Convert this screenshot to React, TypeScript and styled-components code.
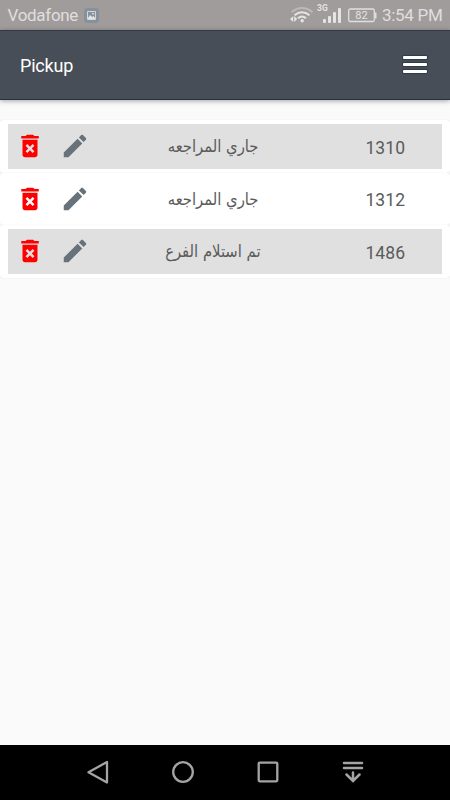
import React from "react";
import styled, { createGlobalStyle } from "styled-components";

const GlobalStyle = createGlobalStyle`
  * { box-sizing: border-box; }
  body { margin: 0; background: #fafafa; font-family: Roboto, "Noto Sans", sans-serif; }
`;

const Screen = styled.div`
  width: 450px;
  height: 800px;
  display: flex;
  flex-direction: column;
  overflow: hidden;
  background: #fafafa;
`;

const StatusBar = styled.div`
  height: 30px;
  flex: none;
  display: flex;
  align-items: center;
  justify-content: space-between;
  padding: 0 8px 0 7.5px;
  background: #a09c9c;
  color: #e0dede;
  font-size: 17px;
  line-height: 30px;
`;

const StatusGroup = styled.div`
  display: flex;
  align-items: center;
  height: 30px;
`;

const Carrier = styled.span`
  width: 76.5px;
  letter-spacing: -0.3px;
`;

const Clock = styled.span`
  width: 60px;
  margin-left: 5px;
  white-space: nowrap;
  letter-spacing: -0.3px;
`;

const Header = styled.header`
  height: 70px;
  flex: none;
  display: flex;
  align-items: center;
  justify-content: space-between;
  padding: 0 23px 0 20px;
  background: #474e57;
  border-top: 1px solid #303945;
  border-bottom: 1px solid #29333f;
  box-shadow: 0 1px 5px rgba(0, 0, 0, 0.35);
  color: #fff;
`;

const Title = styled.h1`
  margin: 2px 0 0;
  font-size: 18px;
  font-weight: 400;
  line-height: 24px;
  letter-spacing: -0.2px;
`;

const MenuButton = styled.button`
  width: 24px;
  height: 17px;
  margin-top: -2px;
  padding: 0;
  border: 0;
  background: none;
  display: flex;
  flex-direction: column;
  justify-content: space-between;
`;

const MenuLine = styled.span`
  height: 3px;
  width: 24px;
  background: #fff;
  border-radius: 1px;
  box-shadow: 0 0 1px 1px #303b49;
`;

const List = styled.main`
  flex: 1;
  padding-top: 20px;
`;

const Card = styled.section`
  height: 52.5px;
  padding: 4px 8px 4px 7.5px;
  background: #fff;
  border-radius: 3px;
  box-shadow: 0 0 1px rgba(0, 0, 0, 0.16);
`;

const Row = styled.div<{ $shaded: boolean }>`
  height: 44.5px;
  display: grid;
  grid-template-columns: 45px 45px 231px 1fr;
  align-items: center;
  justify-items: center;
  background: ${({ $shaded }) => ($shaded ? "#e0e0e0" : "#fff")};
  color: #5b5b5b;
`;

const ActionIcon = styled.svg<{ $color: string }>`
  width: 30px;
  height: 30px;
  display: block;
  fill: ${({ $color }) => $color};
`;

const Status = styled.span`
  font-family: "DejaVu Sans", sans-serif;
  font-size: 17px;
  line-height: 30px;
  white-space: nowrap;
  transform: scaleX(0.87);
`;

const OrderNumber = styled.span`
  margin-top: 3px;
  font-size: 17.5px;
  line-height: 24px;
  letter-spacing: 0.1px;
`;

const NavBar = styled.nav`
  height: 55px;
  flex: none;
  display: grid;
  grid-template-columns: repeat(4, 85px);
  justify-content: center;
  align-items: center;
  justify-items: center;
  background: #000;
`;

const NavIcon = styled.svg`
  width: 26px;
  height: 26px;
  margin-top: -1px;
  fill: none;
  stroke: #a4a4a4;
  stroke-width: 2.3;
`;

const orders = [
  { id: "1310", status: "جاري المراجعه" },
  { id: "1312", status: "جاري المراجعه" },
  { id: "1486", status: "تم استلام الفرع" },
];

const PictureIcon = () => (
  <svg width="15" height="15" viewBox="0 0 15 15">
    <rect width="15" height="15" rx="3" fill="#87919a" />
    <path d="M3.5 3.5h8v8h-8z" fill="none" stroke="#d3d6d8" />
    <path d="M4 10l2-3 2 2 1.500-1L11 10v1H4z" fill="#e3e5e6" />
    <circle cx="9" cy="5.700" r="0.900" fill="#e3e5e6" />
  </svg>
);

const WifiIcon = () => (
  <svg width="24" height="18" viewBox="0 0 24 18" fill="none" stroke="#e5e3e3" strokeWidth="2">
    <path d="M1.500 6.200C8 .600 16 .600 22.500 6.200" stroke="#bbb8b8" />
    <path d="M4.500 9.200c4.500-4 10.500-4 15 0" />
    <path d="M8 12.300c2.400-2.200 5.600-2.200 8 0" />
    <circle cx="12.200" cy="14.800" r="1.700" fill="#e5e3e3" stroke="none" />
    <path d="M3.200 10v6L0 13zM4.200 10v6l3-3z" fill="#e5e3e3" stroke="none" />
  </svg>
);

const SignalIcon = () => (
  <svg width="26" height="24" viewBox="0 0 26 24" fill="#e5e3e3">
    <text x="0" y="8" fontSize="8.500" fontWeight="700" fontFamily="Roboto">3G</text>
    <rect x="6" y="16" width="3" height="4" rx="1" />
    <rect x="11" y="13" width="3" height="7" rx="1" />
    <rect x="16" y="9" width="3" height="11" rx="1" />
    <rect x="21" y="5" width="3" height="15" rx="1" />
  </svg>
);

const BatteryIcon = () => (
  <svg width="29" height="15" viewBox="0 0 29 15" fill="none" stroke="#e0dede">
    <rect x="0.700" y="1" width="25.600" height="12.500" rx="1.500" strokeWidth="1.300" />
    <path d="M27.700 4.500v6" strokeWidth="1.600" />
    <text x="13.500" y="11.200" textAnchor="middle" fontSize="11" fontFamily="Roboto" fill="#e5e3e3" stroke="none">82</text>
  </svg>
);

const Signals = styled.div`
  display: flex;
  align-items: center;
  gap: 3px;
`;

const BatterySlot = styled.div`
  display: flex;
  margin-left: 2px;
`;

const DeleteIcon = () => (
  <ActionIcon $color="#ff0000" viewBox="0 0 24 24">
    <path d="M6 19c0 1.100.900 2 2 2h8c1.100 0 2-.900 2-2V7H6v12zm2.460-7.120l1.410-1.410L12 12.590l2.120-2.120 1.410 1.410L13.410 14l2.120 2.120-1.410 1.410L12 15.410l-2.120 2.120-1.410-1.410L10.590 14l-2.130-2.120zM15.500 4l-1-1h-5l-1 1H5v2h14V4z" />
  </ActionIcon>
);

const EditIcon = () => (
  <ActionIcon $color="#68727a" viewBox="0 0 24 24">
    <path d="M3 17.250V21h3.750L17.810 9.940l-3.750-3.750L3 17.250zM20.710 7.040c.390-.390.390-1.020 0-1.410l-2.340-2.340c-.390-.390-1.020-.390-1.410 0l-1.830 1.830 3.750 3.750 1.830-1.830z" />
  </ActionIcon>
);

export default function App() {
  return (
    <Screen>
      <GlobalStyle />
      <StatusBar>
        <StatusGroup>
          <Carrier>Vodafone</Carrier>
          <PictureIcon />
        </StatusGroup>
        <StatusGroup>
          <Signals>
            <WifiIcon />
            <SignalIcon />
            <BatterySlot><BatteryIcon /></BatterySlot>
          </Signals>
          <Clock>3:54 PM</Clock>
        </StatusGroup>
      </StatusBar>
      <Header>
        <Title>Pickup</Title>
        <MenuButton aria-label="Menu">
          <MenuLine />
          <MenuLine />
          <MenuLine />
        </MenuButton>
      </Header>
      <List>
        {orders.map((order, index) => (
          <Card key={order.id}>
            <Row $shaded={index % 2 === 0}>
              <DeleteIcon />
              <EditIcon />
              <Status dir="rtl">{order.status}</Status>
              <OrderNumber>{order.id}</OrderNumber>
            </Row>
          </Card>
        ))}
      </List>
      <NavBar>
        <NavIcon viewBox="0 0 26 26"><path d="M22 3v20.500L3.500 13.300z" strokeLinejoin="round" /></NavIcon>
        <NavIcon viewBox="0 0 26 26"><circle cx="13" cy="13" r="9.800" /></NavIcon>
        <NavIcon viewBox="0 0 26 26"><rect x="3.700" y="3.700" width="18.600" height="18.600" rx="1" /></NavIcon>
        <NavIcon viewBox="0 0 26 26" strokeLinecap="round">
          <path d="M4 4h18M4 9h18M13 13.500v8M6.500 15.500l6.500 6.500 6.500-6.500" strokeWidth="2.500" />
        </NavIcon>
      </NavBar>
    </Screen>
  );
}
